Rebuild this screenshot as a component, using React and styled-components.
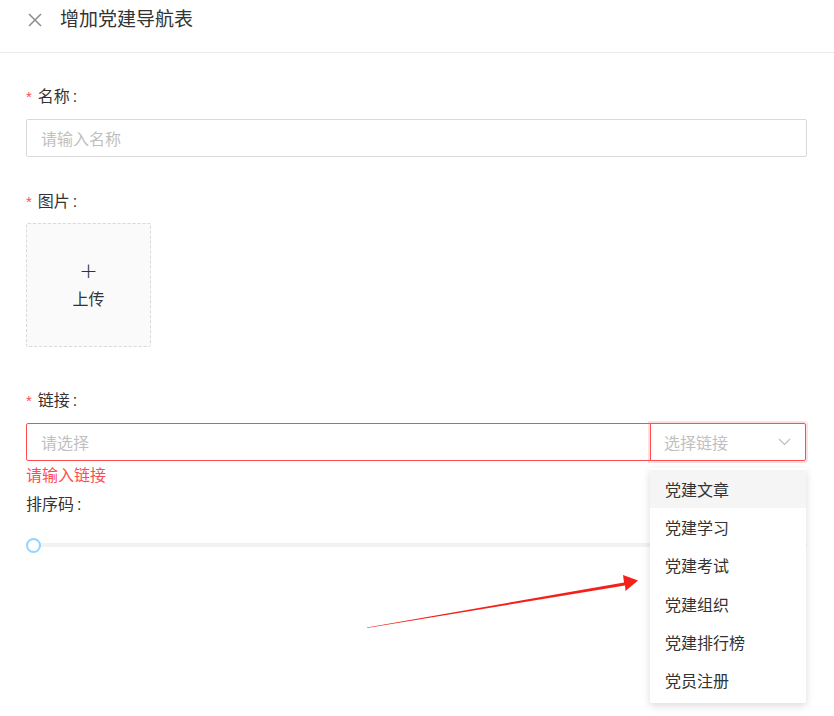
import React from "react";
import styled, { createGlobalStyle } from "styled-components";

const Global = createGlobalStyle`
  html, body { margin: 0; padding: 0; background: #fff; }
  body {
    font-family: "Liberation Sans", "Noto Sans CJK SC", sans-serif;
    color: #333;
    width: 834px;
    height: 716px;
    overflow: hidden;
  }
  * { box-sizing: border-box; }
`;

const Page = styled.div`
  position: relative;
  width: 834px;
  height: 716px;
`;

const Header = styled.div`
  height: 53px;
  display: flex;
  align-items: center;
  padding: 0 0 12px 26px;
  border-bottom: 1px solid #ebebeb;
  gap: 16px;
`;

const CloseBtn = styled.span`
  display: flex;
  width: 18px;
  height: 18px;
  align-items: center;
  justify-content: center;
`;

const Title = styled.h1`
  margin: 0;
  font-size: 19px;
  font-weight: 400;
  color: #333;
  line-height: 26px;
`;

const Form = styled.div`
  padding: 32px 27px 0 26px;
`;

const Label = styled.div`
  display: flex;
  align-items: center;
  font-size: 16px;
  line-height: 24px;
  height: 24px;
  color: #333;
  margin-bottom: ${(p) => p.$mb || 10}px;
  margin-top: ${(p) => p.$mt || 0}px;
`;

const Colon = styled.span`
  margin-left: 3px;
`;

const Star = styled.span`
  color: #ff4d4f;
  font-size: 15px;
  margin-right: 6px;
  font-family: "Liberation Sans", sans-serif;
`;

const TextInput = styled.div`
  height: 38px;
  border: 1px solid ${(p) => (p.$error ? "#ff4d4f" : "#d9d9d9")};
  border-radius: 2px;
  display: flex;
  align-items: center;
  padding: 0 14px;
  font-size: 16px;
  color: #bfbfbf;
  background: #fff;
`;

const Upload = styled.div`
  width: 125px;
  height: 124px;
  border: 1px dashed #d9d9d9;
  border-radius: 2px;
  background: #fafafa;
  display: flex;
  flex-direction: column;
  align-items: center;
  justify-content: center;
  gap: 4px;
  font-size: 16px;
  color: #333;
`;

const Plus = styled.span`
  font-size: 22px;
  line-height: 22px;
  font-weight: 300;
  font-family: "DejaVu Sans", sans-serif;
`;

const Group = styled.div`
  position: relative;
  display: flex;
  height: 38px;
  width: 780px;
`;

const GroupInput = styled(TextInput)`
  flex: 1;
  border-radius: 2px 0 0 2px;
`;

const SelectBox = styled.div`
  width: 156px;
  margin-left: -1px;
  height: 38px;
  border: 1px solid #ff4d4f;
  border-radius: 0 2px 2px 0;
  box-shadow: 0 0 0 2px rgba(255, 77, 79, 0.18);
  display: flex;
  align-items: center;
  justify-content: space-between;
  padding: 0 14px 0 13px;
  font-size: 16px;
  color: #bfbfbf;
  position: relative;
  z-index: 1;
`;

const ErrorText = styled.div`
  color: #ff4d4f;
  font-size: 16px;
  line-height: 22px;
  margin-top: 4px;
`;

const SliderWrap = styled.div`
  position: relative;
  height: 14px;
  margin-top: 21px;
  display: flex;
  align-items: center;
`;

const Rail = styled.div`
  width: 100%;
  height: 4px;
  background: #f2f2f2;
  border-radius: 2px;
`;

const Thumb = styled.div`
  position: absolute;
  left: 0;
  top: 0;
  width: 15px;
  height: 15px;
  border-radius: 50%;
  background: #fff;
  border: 2px solid #91d5ff;
`;

const Dropdown = styled.div`
  position: absolute;
  top: 45px;
  right: 0;
  width: 156px;
  background: #fff;
  padding: 2px 0 4px;
  box-shadow: 0 3px 8px rgba(0, 0, 0, 0.14);
  border-radius: 2px;
  z-index: 5;
`;

const Option = styled.div`
  height: 38.2px;
  display: flex;
  align-items: center;
  padding: 0 15px;
  font-size: 16px;
  color: #333;
  background: ${(p) => (p.$active ? "#f5f5f5" : "transparent")};
`;

const ArrowLayer = styled.svg`
  position: absolute;
  left: 0;
  top: 0;
  pointer-events: none;
  z-index: 10;
`;

const options = ["党建文章", "党建学习", "党建考试", "党建组织", "党建排行榜", "党员注册"];

export default function App() {
  return (
    <Page>
      <Global />
      <Header>
        <CloseBtn>
          <svg width="16" height="16" viewBox="0 0 16 16">
            <path d="M2 2 L14 14 M14 2 L2 14" stroke="#8c8c8c" strokeWidth="1.5" fill="none" />
          </svg>
        </CloseBtn>
        <Title>增加党建导航表</Title>
      </Header>
      <Form>
        <Label>
          <Star>*</Star>名称<Colon>:</Colon>
        </Label>
        <TextInput>请输入名称</TextInput>

        <Label $mt={33} $mb={9}>
          <Star>*</Star>图片<Colon>:</Colon>
        </Label>
        <Upload>
          <Plus>+</Plus>
          <span>上传</span>
        </Upload>

        <Label $mt={42} $mb={10}>
          <Star>*</Star>链接<Colon>:</Colon>
        </Label>
        <Group>
          <GroupInput $error>请选择</GroupInput>
          <SelectBox>
            <span>选择链接</span>
            <svg width="13" height="8" viewBox="0 0 13 8">
              <path d="M1 1 L6.5 6.5 L12 1" stroke="#bfbfbf" strokeWidth="1.2" fill="none" />
            </svg>
          </SelectBox>
          <Dropdown>
            {options.map((o, i) => (
              <Option key={o} $active={i === 0}>
                {o}
              </Option>
            ))}
          </Dropdown>
        </Group>
        <ErrorText>请输入链接</ErrorText>
        <Label $mt={6} $mb={0}>
          排序码<Colon>:</Colon>
        </Label>
        <SliderWrap>
          <Rail />
          <Thumb />
        </SliderWrap>
      </Form>
      <ArrowLayer width="834" height="716" viewBox="0 0 834 716">
        <polygon
          points="367,627.5 624,582.5 623,575 638,580.5 625.5,591 625,585.5 367,628"
          fill="#f5201a"
        />
      </ArrowLayer>
    </Page>
  );
}
